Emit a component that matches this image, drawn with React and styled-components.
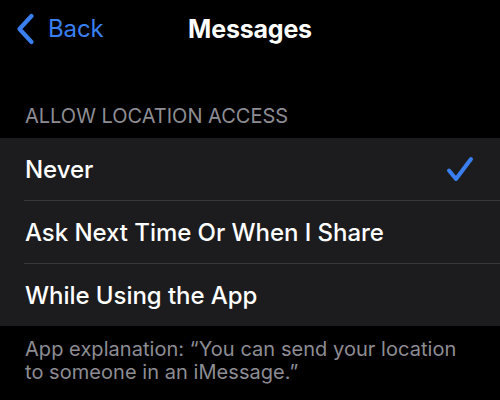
import React from "react";
import styled, { createGlobalStyle } from "styled-components";

const Global = createGlobalStyle`
  html, body { margin: 0; padding: 0; background: #000; }
  body { font-family: Inter, "Noto Sans", "Liberation Sans", sans-serif; -webkit-font-smoothing: antialiased; }
`;

const Screen = styled.div`
  width: 500px;
  height: 400px;
  background: #000;
  overflow: hidden;
  display: flex;
  flex-direction: column;
`;

const NavBar = styled.div`
  height: 57px;
  display: grid;
  grid-template-columns: 1fr auto 1fr;
  align-items: center;
  padding: 0 16px;
`;

const BackButton = styled.div`
  display: flex;
  align-items: center;
  gap: 13px;
  color: #3a7ff0;
  font-size: 24px;
  font-weight: 400;
  letter-spacing: -0.1px;
`;

const Title = styled.div`
  color: #fff;
  font-size: 25px;
  font-weight: 700;
  letter-spacing: -0.2px;
`;

const SectionHeader = styled.div`
  height: 81px;
  box-sizing: border-box;
  display: flex;
  align-items: flex-end;
  padding: 0 25px 12px;
  color: #8d8d93;
  font-size: 20px;
  line-height: 1;
  font-weight: 400;
`;

const Group = styled.div`
  background: #1c1c1e;
  display: flex;
  flex-direction: column;
`;

const Row = styled.div`
  height: 62px;
  display: flex;
  align-items: center;
  padding: 0 26px 0 25px;
  position: relative;
  color: #fff;
  font-size: 24px;
  font-weight: 500;
  letter-spacing: -0.05px;
  border-bottom: ${(p) => (p.$last ? "none" : "1px solid transparent")};
  &::after {
    content: "";
    display: ${(p) => (p.$last ? "none" : "block")};
    position: absolute;
    left: 24px;
    right: 0;
    bottom: -1px;
    height: 1px;
    background: #38383a;
  }
`;

const Label = styled.span`
  flex: 1;
`;

const Footer = styled.div`
  padding: 12px 25px 0;
  color: #8d8d93;
  font-size: 20px;
  line-height: 23px;
  letter-spacing: 0.05px;
`;

const Chevron = () => (
  <svg width="19" height="32" viewBox="0 0 19 32" fill="none">
    <path d="M15.5 3 L3.5 16 L15.5 29" stroke="#3a7ff0" strokeWidth="4.2" strokeLinecap="round" strokeLinejoin="round" />
  </svg>
);

const Check = () => (
  <svg width="28" height="26" viewBox="0 0 28 26" fill="none">
    <path d="M3 14.5 L10 23 L25 3" stroke="#3a7ff0" strokeWidth="4" strokeLinecap="round" strokeLinejoin="round" />
  </svg>
);

const options = ["Never", "Ask Next Time Or When I Share", "While Using the App"];

export default function App() {
  return (
    <Screen>
      <Global />
      <NavBar>
        <BackButton>
          <Chevron />
          Back
        </BackButton>
        <Title>Messages</Title>
        <div />
      </NavBar>
      <SectionHeader>ALLOW LOCATION ACCESS</SectionHeader>
      <Group>
        {options.map((o, i) => (
          <Row key={o} $last={i === options.length - 1}>
            <Label>{o}</Label>
            {i === 0 && <Check />}
          </Row>
        ))}
      </Group>
      <Footer>
        App explanation: “You can send your location
        <br />
        to someone in an iMessage.”
      </Footer>
    </Screen>
  );
}
